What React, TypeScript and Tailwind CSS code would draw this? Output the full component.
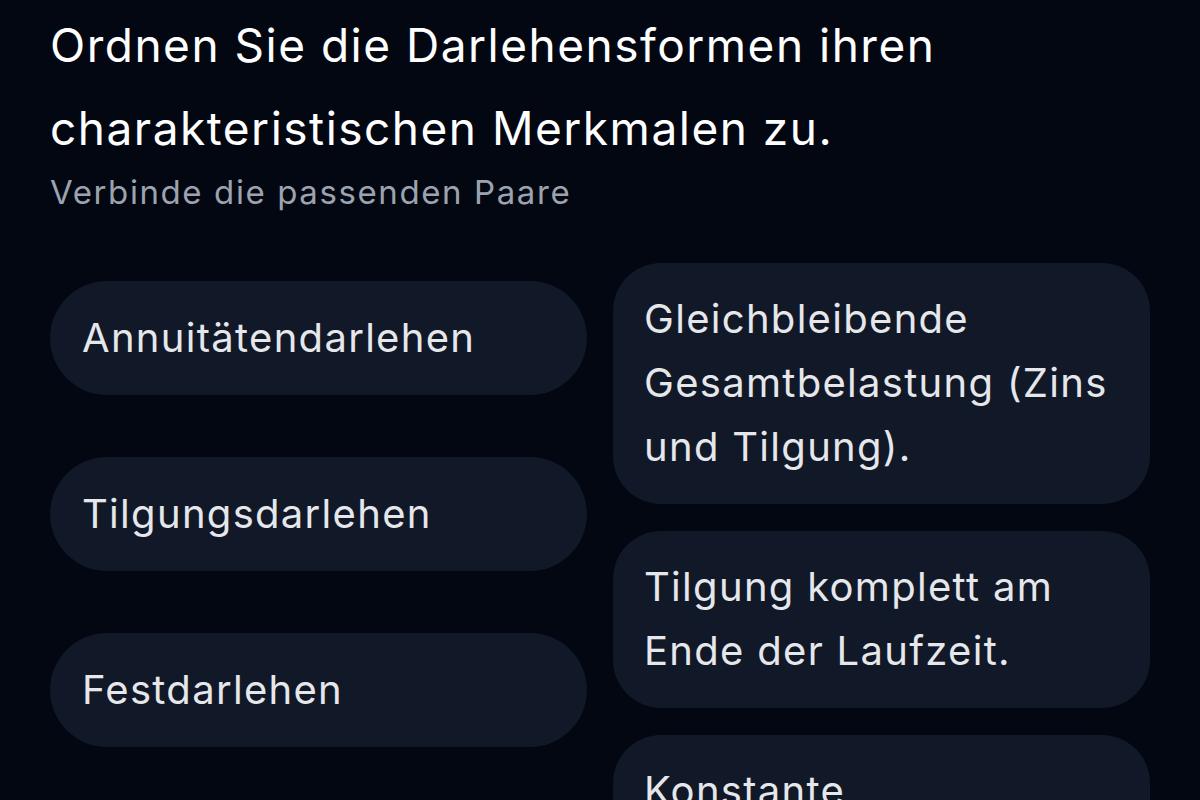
import React from "react";

const terms = ["Annuitätendarlehen", "Tilgungsdarlehen", "Festdarlehen"];
const traits = [
  "Gleichbleibende Gesamtbelastung (Zins und Tilgung).",
  "Tilgung komplett am Ende der Laufzeit.",
  "Konstante Tilgungsraten, sinkende Zinsen.",
];

export default function App() {
  return (
    <div
      className="w-[1200px] h-[800px] overflow-hidden bg-[#030712] px-[50px] pt-[4px]"
      style={{ fontFamily: "Inter, 'Noto Sans', sans-serif" }}
    >
      <h1 className="text-[46px] leading-[83px] tracking-[1.5px] text-white font-normal">
        Ordnen Sie die Darlehensformen ihren charakteristischen Merkmalen zu.
      </h1>
      <p className="text-[33px] leading-[44px] tracking-[1.6px] text-[#9ca3af]">
        Verbinde die passenden Paare
      </p>
      <div className="mt-[49px] grid grid-cols-2 gap-[26px]">
        <div className="flex flex-col gap-[62px] pt-[18px]">
          {terms.map((t) => (
            <div
              key={t}
              className="rounded-full bg-[#111827] pl-[32px] pr-[33px] py-[25px] text-[40px] leading-[64px] tracking-[1.3px] text-[#e5e7eb]"
            >
              {t}
            </div>
          ))}
        </div>
        <div className="flex flex-col gap-[27px]">
          {traits.map((t) => (
            <div
              key={t}
              className="rounded-[48px] bg-[#111827] pl-[31px] pr-[33px] pt-[24px] pb-[25px] text-[40px] leading-[64px] tracking-[1.3px] text-[#e5e7eb]"
            >
              {t}
            </div>
          ))}
        </div>
      </div>
    </div>
  );
}
